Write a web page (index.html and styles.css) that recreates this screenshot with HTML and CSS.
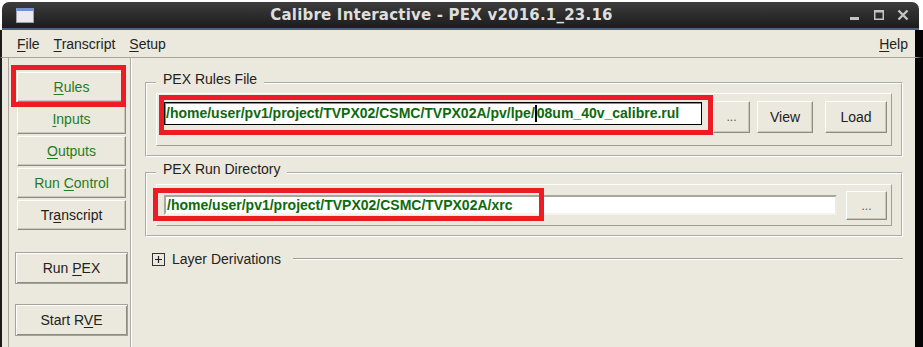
FILE: index.html
```html
<!DOCTYPE html>
<html lang="en">
<head>
    <meta charset="UTF-8">
    <title>Calibre Interactive - PEX v2016.1_23.16</title>
    <link rel="stylesheet" href="styles.css">
</head>
<body>
    <div class="window">
        <div class="titlebar">
            <div class="app-icon"><span></span></div>
            <div class="title">Calibre Interactive - PEX v2016.1_23.16</div>
            <div class="controls">
                <svg width="12" height="12" viewBox="0 0 12 12"><rect x="1" y="8" width="9" height="3" fill="#c4c4c4"/></svg>
                <svg width="12" height="12" viewBox="0 0 12 12"><rect x="1.75" y="1.75" width="8.5" height="8.5" fill="none" stroke="#c4c4c4" stroke-width="1.5"/><rect x="1" y="1" width="10" height="2.5" fill="#c4c4c4"/></svg>
                <svg width="12" height="12" viewBox="0 0 12 12"><path d="M1.5 1.5 L10.5 10.5 M10.5 1.5 L1.5 10.5" stroke="#c4c4c4" stroke-width="2.4"/></svg>
            </div>
        </div>

        <div class="menubar">
            <span class="menu"><u>F</u>ile</span>
            <span class="menu"><u>T</u>ranscript</span>
            <span class="menu"><u>S</u>etup</span>
            <span class="menu help"><u>H</u>elp</span>
        </div>

        <div class="content">
            <div class="sidebar">
                <button class="side-btn green"><u>R</u>ules</button>
                <button class="side-btn green"><u>I</u>nputs</button>
                <button class="side-btn green"><u>O</u>utputs</button>
                <button class="side-btn green">Run <u>C</u>ontrol</button>
                <button class="side-btn">Tr<u>a</u>nscript</button>
                <button class="side-btn action">Run <u>P</u>EX</button>
                <button class="side-btn action">Start R<u>V</u>E</button>
            </div>

            <div class="main">
                <fieldset class="group">
                    <legend>PEX Rules File</legend>
                    <div class="inner rules-row">
                        <div class="entry focused">/home/user/pv1/project/TVPX02/CSMC/TVPX02A/pv/lpe/<span class="cursor"></span>08um_40v_calibre.rul</div>
                        <button class="btn dots">...</button>
                        <button class="btn view">View</button>
                        <button class="btn load">Load</button>
                    </div>
                </fieldset>

                <fieldset class="group">
                    <legend>PEX Run Directory</legend>
                    <div class="inner dir-row">
                        <div class="entry">/home/user/pv1/project/TVPX02/CSMC/TVPX02A/xrc</div>
                        <button class="btn dots small">...</button>
                    </div>
                </fieldset>

                <div class="expander">
                    <span class="plus-box">
                        <svg width="13" height="13" viewBox="0 0 13 13"><rect x="0.5" y="0.5" width="12" height="12" fill="none" stroke="#333"/><path d="M3 6.5 H10 M6.5 3 V10" stroke="#222" stroke-width="1.2"/></svg>
                    </span>
                    <span class="expander-label">Layer Derivations</span>
                    <span class="expander-line"></span>
                </div>
            </div>
        </div>

        <!-- red annotation boxes drawn over the screenshot -->
        <div class="mark mark-rules-btn"></div>
        <div class="mark mark-rules-file"></div>
        <div class="mark mark-run-dir"></div>
    </div>
</body>
</html>
```

FILE: styles.css
```css
body {
    margin: 0;
    background: #fff;
    font-family: 'Liberation Sans', Arial, sans-serif;
    font-size: 14px;
    color: #222;
}

.window {
    position: relative;
    width: 923px;
    height: 347px;
    overflow: hidden;
    display: flex;
    flex-direction: column;
}

/* title bar */
.titlebar {
    height: 26px;
    margin: 2px 4px 0 2px;
    border-radius: 7px 7px 0 0;
    background: linear-gradient(#3d3d3d, #1c1c1c);
    border-bottom: 2px solid #4e6282;
    display: flex;
    align-items: center;
}

.app-icon {
    width: 16px;
    height: 11px;
    margin-left: 14px;
    background: #e9e9ee;
    border: 1px solid #9aa0ad;
    border-top: 3px solid #6f93d3;
}

.title {
    flex: 1;
    text-align: center;
    font-family: 'DejaVu Sans', sans-serif;
    font-weight: bold;
    font-size: 15px;
    color: #dedede;
    letter-spacing: 0.2px;
}

.controls {
    display: flex;
    gap: 12px;
    margin-right: 10px;
}

/* menu bar */
.menubar {
    height: 27px;
    display: flex;
    align-items: center;
    gap: 14px;
    padding: 0 7px 0 15px;
    background: #ebe9dd;
    border-left: 2px solid #1c1c1c;
    border-right: 8px solid #050505;
    border-bottom: 1px solid #a7a59a;
}

.menu u,
.side-btn u {
    text-underline-offset: 2px;
}

.help {
    margin-left: auto;
}

/* body */
.content {
    flex: 1;
    display: flex;
    background: #ebe9dd;
    border-left: 2px solid #1c1c1c;
    border-right: 8px solid #050505;
}

.sidebar {
    width: 115px;
    margin-left: 6px;
    padding: 14px 0 0 8px;
    border-left: 1px solid #a8a69a;
    border-right: 2px groove #fff;
    display: flex;
    flex-direction: column;
}

.side-btn {
    width: 109px;
    height: 30px;
    margin-bottom: 2px;
    padding: 0;
    font-family: inherit;
    font-size: 14px;
    color: #222;
    background: #ebe9dd;
    border: 1px solid;
    border-color: #fff #8e8c80 #8e8c80 #fff;
    box-shadow: inset -1px -1px 0 #c9c7bb;
}

.side-btn.green {
    color: #1f7d1f;
}

.side-btn.action {
    width: 113px;
    height: 32px;
    margin: 20px 0 0 -2px;
    border: 1px solid #a4a296;
    box-shadow: inset 1px 1px 0 #fff, inset -1px -1px 0 #8e8c80;
}

.main {
    flex: 1;
    padding: 0 12px 0 13px;
}

.group {
    margin: 0 0 6px;
    padding: 0 9px 9px;
    border: 2px groove #fff;
}

.group:first-child {
    margin-top: 15px;
}

.group legend {
    padding: 0 7px 8px;
    line-height: 12px;
    color: #222;
}

.inner {
    display: flex;
    align-items: flex-start;
    border: 1px solid;
    border-color: #fff #a09e92 #a09e92 #fff;
}

.rules-row {
    padding: 7px 4px 12px 7px;
}

.dir-row {
    margin-top: 1px;
    padding: 6px 4px 5px 7px;
}

.entry {
    height: 16px;
    padding: 0 1px;
    line-height: 16px;
    background: #fff;
    font-weight: bold;
    color: #0d6a0d;
    white-space: nowrap;
    overflow: hidden;
    border: 2px solid;
    border-color: #a9a79c #ecebe4 #f4f3ee #a9a79c;
}

.rules-row .entry {
    width: 534px;
    margin-top: 1px;
    height: 21px;
    line-height: 21px;
    border: 1px solid #000;
    box-shadow: inset 1px 1px 0 #8e8c80;
}

.dir-row .entry {
    flex: 1;
    margin-top: 4px;
}

.cursor {
    display: inline-block;
    width: 0;
    height: 17px;
    border-left: 2px solid #000;
    vertical-align: -4px;
}

.btn {
    height: 32px;
    padding: 0;
    font-family: inherit;
    font-size: 14px;
    color: #222;
    background: #ebe9dd;
    border: 1px solid;
    border-color: #fff #8e8c80 #8e8c80 #fff;
    box-shadow: inset -1px -1px 0 #c9c7bb;
}

.dots {
    width: 37px;
    margin-left: 11px;
    color: #555;
    font-size: 12px;
}

.view {
    width: 56px;
    margin-left: 7px;
}

.load {
    width: 62px;
    margin-left: 12px;
}

.dots.small {
    width: 41px;
    height: 29px;
    margin-left: 9px;
}

.expander {
    display: flex;
    align-items: center;
    margin-top: 14px;
    padding-left: 7px;
    height: 16px;
}

.plus-box {
    display: flex;
    width: 13px;
    height: 13px;
}

.expander-label {
    margin-left: 7px;
    color: #222;
}

.expander-line {
    flex: 1;
    margin-left: 12px;
    height: 1px;
    background: #a09e92;
    border-bottom: 1px solid #fff;
}

/* annotations */
.mark {
    position: absolute;
    border: 5px solid #ed1c24;
}

.mark-rules-btn {
    left: 11px;
    top: 65px;
    width: 105px;
    height: 32px;
}

.mark-rules-file {
    left: 159px;
    top: 95px;
    width: 544px;
    height: 30px;
}

.mark-run-dir {
    left: 153px;
    top: 188px;
    width: 381px;
    height: 23px;
}
```
